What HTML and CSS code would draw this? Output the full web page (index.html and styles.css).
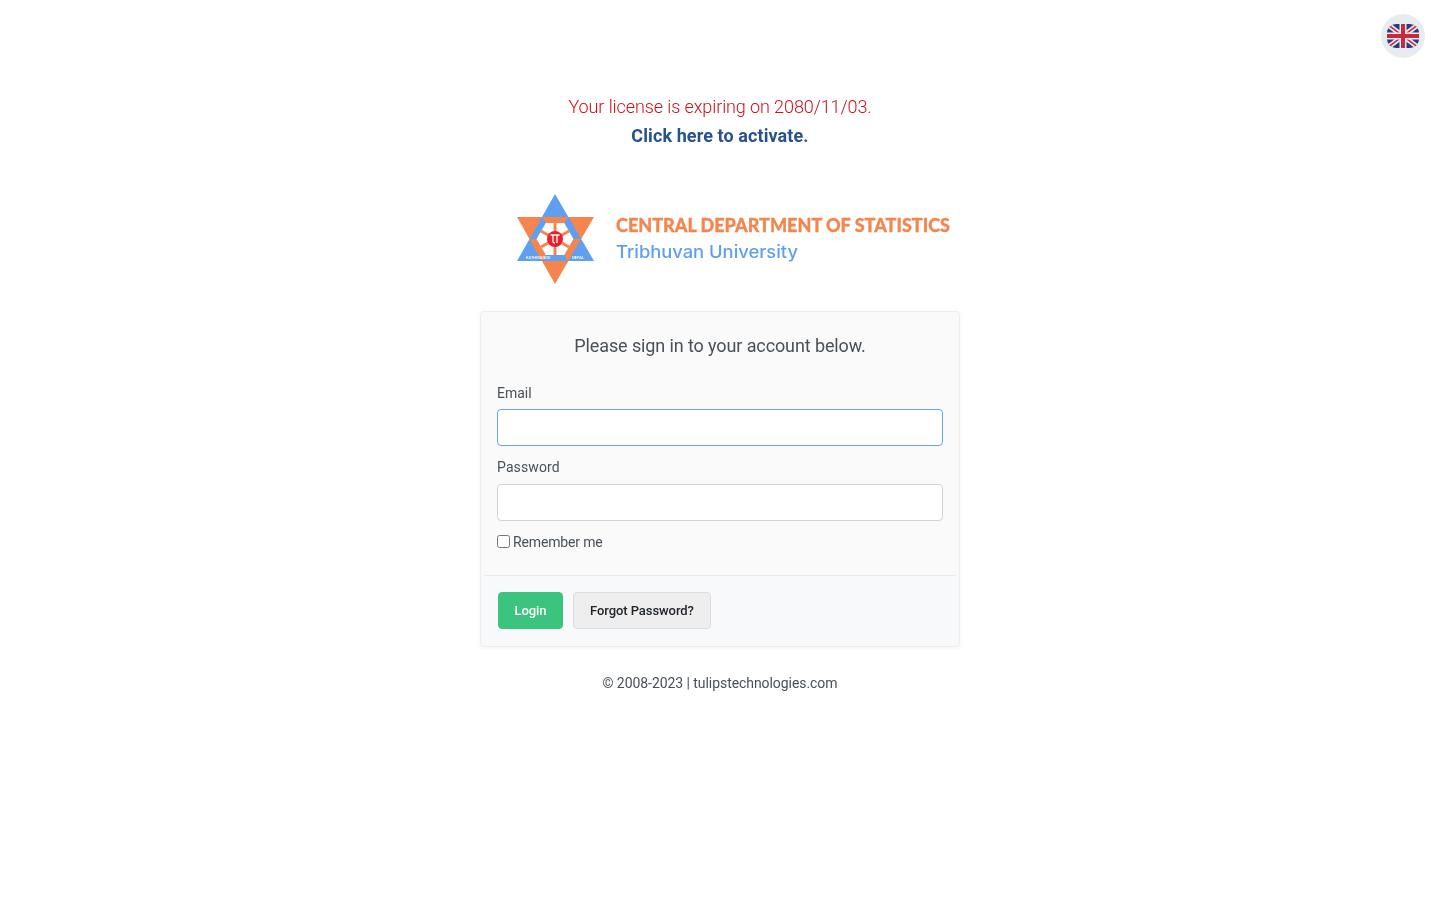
FILE: index.html
```html
<!DOCTYPE html>
<html lang="en">
<head>
    <meta charset="UTF-8">
    <meta name="viewport" content="width=device-width, initial-scale=1.0">
    <title>Login</title>
    <link rel="stylesheet" href="styles.css">
</head>
<body>

<a class="lang-btn" href="#" aria-label="English">
    <svg width="32" height="24" viewBox="0 0 32 24">
        <defs>
            <clipPath id="flag-clip"><rect width="32" height="24" rx="9" ry="9"/></clipPath>
        </defs>
        <g clip-path="url(#flag-clip)">
            <rect width="32" height="24" fill="#2b3a7d"/>
            <path d="M0 0L32 24M32 0L0 24" stroke="#eeeef2" stroke-width="5"/>
            <path d="M0 0L32 24M32 0L0 24" stroke="#c9283e" stroke-width="1.6"/>
            <path d="M16 0V24M0 12H32" stroke="#eeeef2" stroke-width="7"/>
            <path d="M16 0V24M0 12H32" stroke="#c9283e" stroke-width="4"/>
        </g>
    </svg>
</a>

<div class="notice">
    <p class="notice-expiry">Your license is expiring on 2080/11/03.</p>
    <a class="notice-link" href="#">Click here to activate.</a>
</div>

<div class="login-wrap">
    <svg class="logo" width="480" height="120" viewBox="480 180 480 120">
        <!-- star: solid triangles, then the woven ring -->
        <path fill="#f5854d" d="M517 217H594L555 284Z"/>
        <path fill="#5f9ff0" d="M555 194L594 261H517Z"/>
        <path fill="#f5854d" d="M542 217H568L564.2 223H545.8Z"/>
        <path fill="#f5854d" d="M581.2 239L568 261L564.2 255L573.5 239Z"/>
        <path fill="#f5854d" d="M529 239H536.5L545.8 255L542 261Z"/>
        <!-- centre flower -->
        <path fill="#fff" d="M545.8 223H564.2L573.5 239L564.2 255H545.8L536.5 239Z"/>
        <path fill="none" stroke="#f5854d" stroke-width="3" d="M555 223V255M541 231L569 247M569 231L541 247"/>
        <circle cx="555" cy="239" r="8" fill="#e8202e"/>
        <path fill="none" stroke="#fff" stroke-width="1.3" d="M550.5 235h9M553 235v6q0 2 2 2M557 235v8"/>
        <text class="logo-tiny" x="526" y="259">KATHMANDU</text>
        <text class="logo-tiny" x="572" y="259">NEPAL</text>
        <text class="logo-title" x="616" y="232" textLength="334" lengthAdjust="spacing">CENTRAL DEPARTMENT OF STATISTICS</text>
        <text class="logo-sub" x="616" y="258" textLength="182" lengthAdjust="spacingAndGlyphs">Tribhuvan University</text>
    </svg>

    <form class="login-card">
        <div class="card-body">
            <h5 class="card-title">Please sign in to your account below.</h5>
            <div class="form-group">
                <label for="email">Email</label>
                <input class="form-control is-focus" type="text" id="email">
            </div>
            <div class="form-group">
                <label class="label-wide" for="password">Password</label>
                <input class="form-control" type="password" id="password">
            </div>
            <label class="remember"><input type="checkbox"> Remember me</label>
        </div>
        <div class="card-footer">
            <button class="btn btn-login" type="button">Login</button>
            <button class="btn btn-forgot" type="button">Forgot Password?</button>
        </div>
    </form>

    <p class="copyright">© 2008-2023 | tulipstechnologies.com</p>
</div>

</body>
</html>
```

FILE: styles.css
```css
body {
    margin: 0;
    background-color: #fff;
    font-family: Roboto, "Liberation Sans", sans-serif;
    font-size: 14px;
    color: #495057;
}

/* language button */
.lang-btn {
    position: absolute;
    top: 14px;
    right: 15px;
    width: 44px;
    height: 44px;
    border-radius: 50%;
    background-color: #e9ecef;
    display: flex;
    align-items: center;
    justify-content: center;
}

/* license notice */
.notice {
    padding-top: 92px;
    text-align: center;
    font-size: 18px;
    line-height: 29px;
    transform: translateZ(0); /* grayscale text */
}
.notice-expiry {
    margin: 0;
    font-weight: 300;
    letter-spacing: -0.1px;
    color: #d0101a;
}
.notice-link {
    font-weight: 700;
    letter-spacing: 0.09px;
    color: #27528f;
    text-decoration: none;
}

.login-wrap {
    width: 480px;
    margin: 30px auto 0;
    transform: translateZ(0);
}
.logo {
    display: block;
    margin-bottom: 11px;
}
.logo-title {
    font-family: Lato, "Open Sans", sans-serif;
    font-size: 18px;
    font-weight: 900;
    fill: #f5854d;
    stroke: #f5854d;
    stroke-width: 0.3px;
}
.logo-sub {
    font-family: Inter, "Open Sans", sans-serif;
    font-size: 17px;
    font-weight: 500;
    fill: #5f9ff0;
}
.logo-tiny {
    font-family: Roboto, sans-serif;
    font-size: 4px;
    font-weight: 500;
    fill: #fff;
}

/* card */
.login-card {
    background-color: #fafafa;
    border: 1px solid #ebedef;
    border-radius: 4px;
    box-shadow: 0 1px 4px rgba(0,0,0,0.06);
}
.card-body {
    padding: 19px 13px 0;
    height: 244px;
    border-bottom: 1px solid #e9ecef;
    margin: 0 3px;
}
.card-title {
    margin: 0 0 22.5px;
    font-size: 18px;
    font-weight: 400;
    line-height: 29px;
    letter-spacing: -0.11px;
    text-align: center;
}
.form-group {
    margin-bottom: 11px;
}
.form-group label {
    display: block;
    line-height: 21px;
    margin-bottom: 5.5px;
}
.form-group .label-wide {
    letter-spacing: 0.12px;
}
.form-control {
    display: block;
    width: 100%;
    height: 37px;
    box-sizing: border-box;
    border: 1px solid #ced4da;
    border-radius: 4px;
    background-color: #fff;
    outline: none;
}
.is-focus {
    border-color: #63a8f5;
}
.remember {
    display: flex;
    align-items: center;
    gap: 3px;
    line-height: 21px;
    letter-spacing: -0.15px;
}
.remember input {
    margin: 0 0 2px;
    width: 13px;
    height: 13px;
}

.card-footer {
    display: flex;
    gap: 10px;
    padding: 16px 17px 17px;
    background-color: #f8f9fa;
    border-radius: 0 0 4px 4px;
}
.btn {
    height: 37px;
    padding: 0 16px;
    border-radius: 4px;
    font-family: inherit;
    font-size: 13px;
    font-weight: 500;
    letter-spacing: -0.07px;
    cursor: pointer;
}
.btn-login {
    padding: 0 15.5px;
    border: 1px solid #3ac47d;
    background-color: #3ac47d;
    color: #fff;
}
.btn-forgot {
    border: 1px solid #dcdcdc;
    background-color: #eeeeee;
    color: #212529;
}

.copyright {
    margin: 26px 0 0;
    text-align: center;
    line-height: 21px;
    letter-spacing: -0.06px;
}
```
